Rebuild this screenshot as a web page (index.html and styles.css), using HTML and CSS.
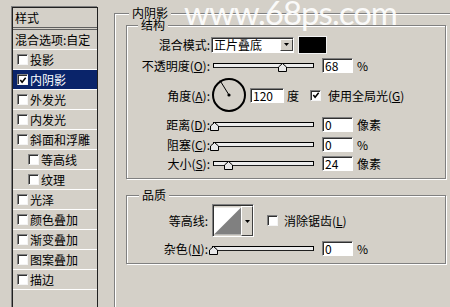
FILE: index.html
```html
<!DOCTYPE html>
<html>
<head>
<meta charset="utf-8">
<title>内阴影</title>
<link rel="stylesheet" href="styles.css">
</head>
<body>
<div class="dialog">
  <div class="styles">
    <div class="st-head">样式</div>
    <div class="st-row st-blend">混合选项:自定</div>
    <div class="st-row"><span class="cb"></span>投影</div>
    <div class="st-row sel"><span class="cb"><svg width="9" height="9" viewBox="0 0 9 9"><path d="M1.5 4 L3.5 6.5 L7.5 1.5" fill="none" stroke="#000" stroke-width="1.7"/></svg></span>内阴影</div>
    <div class="st-row"><span class="cb"></span>外发光</div>
    <div class="st-row"><span class="cb"></span>内发光</div>
    <div class="st-row"><span class="cb"></span>斜面和浮雕</div>
    <div class="st-row sub"><span class="cb"></span>等高线</div>
    <div class="st-row sub"><span class="cb"></span>纹理</div>
    <div class="st-row"><span class="cb"></span>光泽</div>
    <div class="st-row"><span class="cb"></span>颜色叠加</div>
    <div class="st-row"><span class="cb"></span>渐变叠加</div>
    <div class="st-row"><span class="cb"></span>图案叠加</div>
    <div class="st-row"><span class="cb"></span>描边</div>
  </div>

  <div class="outer">
    <div class="title t-outer">内阴影</div>

    <div class="group struct">
      <div class="title t-struct">结构</div>

      <div class="row r1">
        <span class="lbl">混合模式:</span>
        <div class="select"><span class="sel-text">正片叠底</span><span class="drop"><svg width="5" height="3" viewBox="0 0 5 3"><path d="M0 0 H5 L2.5 3 Z" fill="#000"/></svg></span></div>
        <span class="swatch"></span>
      </div>

      <div class="row r2">
        <span class="lbl">不透明度(<u>O</u>):</span>
        <div class="slider"><div class="track"></div><svg class="thumb" style="left:65px" width="9" height="9" viewBox="0 0 9 9"><path d="M4.5 0.5 L8.5 4 V8.5 H0.5 V4 Z" fill="#e8e8e8" stroke="#000"/></svg></div>
        <span class="field">68</span>
        <span class="unit">%</span>
      </div>

      <div class="row r3">
        <span class="lbl">角度(<u>A</u>):</span>
        <svg class="dial" width="36" height="36" viewBox="0 0 36 36"><circle cx="18" cy="18" r="16" fill="none" stroke="#000" stroke-width="2"/><line x1="18" y1="18" x2="9" y2="3.5" stroke="#000" stroke-width="1"/><circle cx="18" cy="18" r="1.6" fill="#000"/></svg>
        <span class="field f-angle">120</span>
        <span class="unit u-deg">度</span>
        <span class="cb cb-global"><svg width="9" height="9" viewBox="0 0 9 9"><path d="M1.5 4 L3.5 6.5 L7.5 1.5" fill="none" stroke="#000" stroke-width="1.7"/></svg></span>
        <span class="cb-text">使用全局光(<u>G</u>)</span>
      </div>

      <div class="row r4">
        <span class="lbl">距离(<u>D</u>):</span>
        <div class="slider"><div class="track"></div><svg class="thumb" style="left:-3px" width="9" height="9" viewBox="0 0 9 9"><path d="M4.5 0.5 L8.5 4 V8.5 H0.5 V4 Z" fill="#e8e8e8" stroke="#000"/></svg></div>
        <span class="field">0</span>
        <span class="unit">像素</span>
      </div>

      <div class="row r5">
        <span class="lbl">阻塞(<u>C</u>):</span>
        <div class="slider"><div class="track"></div><svg class="thumb" style="left:-3px" width="9" height="9" viewBox="0 0 9 9"><path d="M4.5 0.5 L8.5 4 V8.5 H0.5 V4 Z" fill="#e8e8e8" stroke="#000"/></svg></div>
        <span class="field">0</span>
        <span class="unit">%</span>
      </div>

      <div class="row r6">
        <span class="lbl">大小(<u>S</u>):</span>
        <div class="slider"><div class="track"></div><svg class="thumb" style="left:11px" width="9" height="9" viewBox="0 0 9 9"><path d="M4.5 0.5 L8.5 4 V8.5 H0.5 V4 Z" fill="#e8e8e8" stroke="#000"/></svg></div>
        <span class="field">24</span>
        <span class="unit">像素</span>
      </div>
    </div>

    <div class="group quality">
      <div class="title t-quality">品质</div>

      <div class="row q1">
        <span class="lbl lbl-q">等高线:</span>
        <div class="contour">
          <svg class="curve" width="29" height="29" viewBox="0 0 29 29"><rect width="29" height="29" fill="#fff"/><path d="M0 29 L29 0 V29 Z" fill="#808080"/></svg>
          <span class="drop drop-c"><svg width="5" height="3" viewBox="0 0 5 3"><path d="M0 0 H5 L2.5 3 Z" fill="#000"/></svg></span>
        </div>
        <span class="cb cb-anti"></span>
        <span class="cb-text t-anti">消除锯齿(<u>L</u>)</span>
      </div>

      <div class="row q2">
        <span class="lbl lbl-q">杂色(<u>N</u>):</span>
        <div class="slider s-noise"><div class="track"></div><svg class="thumb" style="left:-3px" width="9" height="9" viewBox="0 0 9 9"><path d="M4.5 0.5 L8.5 4 V8.5 H0.5 V4 Z" fill="#e8e8e8" stroke="#000"/></svg></div>
        <span class="field">0</span>
        <span class="unit">%</span>
      </div>
    </div>
  </div>
</div>
<div class="watermark">www.68ps.com</div>
</body>
</html>
```

FILE: styles.css
```css
html, body {
  margin: 0;
  padding: 0;
}
body {
  width: 450px;
  height: 307px;
  overflow: hidden;
  position: relative;
  background: #d4d0c8;
  font-family: "Noto Sans CJK SC", "Noto Sans", sans-serif;
  font-size: 12px;
  color: #000;
}
u {
  text-decoration: underline;
  text-underline-offset: 1px;
}

.dialog {
  display: flex;
  align-items: flex-start;
}

/* left style list */
.styles {
  margin: 7px 0 0 12px;
  width: 86px;
  height: 320px;
  box-sizing: border-box;
  border: 1px solid #202020;
  box-shadow: -1px -1px 0 #808080;
  flex: none;
}
.st-head {
  height: 19px;
  line-height: 19px;
  padding-left: 2px;
  border-bottom: 3px double #606060;
}
.st-row {
  height: 19px;
  line-height: 19px;
  border-bottom: 1px solid #fff;
  display: flex;
  align-items: center;
  white-space: nowrap;
}
.st-blend {
  padding-left: 2px;
}
.st-row .cb {
  margin: 0 2px 0 4px;
}
.st-row.sub .cb {
  margin-left: 15px;
}
.st-row.sel {
  background: #0a246a;
  color: #fff;
}

/* checkbox */
.cb {
  width: 11px;
  height: 11px;
  box-sizing: border-box;
  background: #fff;
  border: 1px solid;
  border-color: #808080 #f4f4f4 #f4f4f4 #808080;
  box-shadow: inset 1px 1px 0 #303030;
  display: inline-flex;
  align-items: center;
  justify-content: center;
  flex: none;
}
.cb svg {
  display: block;
  margin: 1px 0 0 1px;
}

/* group boxes */
.outer {
  margin: 13px 0 0 16px;
  width: 350px;
  height: 310px;
  box-sizing: border-box;
  border: 1px solid #808080;
  box-shadow: inset 1px 1px 0 #fff;
  flex: none;
}
.title {
  width: fit-content;
  height: 14px;
  line-height: 14px;
  margin-top: -8px;
  padding: 0 3px;
  background: #d4d0c8;
  white-space: nowrap;
}
.t-outer {
  margin-left: 14px;
}
.group {
  margin-left: 11px;
  width: 320px;
  box-sizing: border-box;
  border: 1px solid #808080;
  box-shadow: inset 1px 1px 0 #fff, 1px 1px 0 #fff;
}
.struct {
  margin-top: 5px;
  padding-bottom: 5px;
}
.t-struct {
  margin-left: 11px;
}
.quality {
  margin-top: 16px;
  padding-bottom: 5px;
}
.t-quality {
  margin-left: 12px;
}

/* rows */
.row {
  display: flex;
  align-items: center;
  height: 19px;
  white-space: nowrap;
}
.r1 { margin-top: 3px; }
.r2 { margin-top: 2px; }
.r3 { margin-top: 2px; height: 36px; }
.r4 { margin-top: 2px; }
.r5 { margin-top: 1px; }
.r6 { margin-top: 0; }
.q1 { margin-top: 2px; height: 33px; }
.q2 { margin-top: 2px; }

.lbl {
  width: 83px;
  text-align: right;
  flex: none;
}
.lbl-q {
  width: 81px;
}

/* select */
.select {
  margin-left: 1px;
  width: 83px;
  height: 16px;
  box-sizing: border-box;
  background: #fff;
  border: 1px solid;
  border-color: #808080 #fff #fff #808080;
  box-shadow: inset 1px 1px 0 #303030;
  display: flex;
  align-items: center;
  justify-content: space-between;
}
.sel-text {
  padding-left: 2px;
  line-height: 14px;
}
.drop {
  width: 13px;
  height: 12px;
  box-sizing: border-box;
  background: #d4d0c8;
  border: 1px solid;
  border-color: #fff #404040 #404040 #fff;
  display: flex;
  align-items: center;
  justify-content: center;
  flex: none;
}
.swatch {
  margin-left: 4px;
  width: 29px;
  height: 18px;
  box-sizing: border-box;
  background: #000;
  border: 1px solid #f2f2f2;
}

/* slider */
.slider {
  position: relative;
  margin-left: 3px;
  width: 101px;
  height: 19px;
  flex: none;
}
.s-noise {
  margin-left: 4px;
  width: 102px;
}
.track {
  margin-top: 7px;
  height: 5px;
  box-sizing: border-box;
  border: 1px solid #000;
  border-bottom-color: #202020;
  background: #ececec;
}
.thumb {
  position: absolute;
  top: 7px;
  display: block;
}

/* number fields */
.field {
  margin-left: 8px;
  width: 31px;
  height: 15px;
  box-sizing: border-box;
  background: #fff;
  border: 1px solid;
  border-color: #808080 #fff #fff #808080;
  box-shadow: inset 1px 1px 0 #303030;
  padding-left: 2px;
  line-height: 13px;
  flex: none;
}
.unit {
  margin-left: 4px;
}

/* angle */
.dial {
  margin-left: 1px;
  display: block;
  flex: none;
}
.f-angle {
  margin-left: 3px;
  width: 34px;
}
.u-deg {
  margin-left: 3px;
}
.cb-global {
  margin-left: 11px;
}
.cb-text {
  margin-left: 7px;
}

/* contour */
.contour {
  margin-left: 4px;
  width: 42px;
  height: 33px;
  box-sizing: border-box;
  border: 1px solid;
  border-color: #808080 #fff #fff #808080;
  box-shadow: inset 1px 1px 0 #303030;
  display: flex;
  align-items: stretch;
  padding: 1px 0 0 1px;
  flex: none;
}
.curve {
  display: block;
  width: 28px;
  height: 30px;
}
.drop-c {
  height: auto;
  width: 12px;
}
.cb-anti {
  margin-left: 13px;
}
.t-anti {
  margin-left: 6px;
}

/* watermark overlay */
.watermark {
  position: absolute;
  left: 184px;
  top: -4px;
  font-family: "Lato", "DejaVu Sans", sans-serif;
  font-size: 33px;
  line-height: 33px;
  letter-spacing: -1px;
  color: rgba(255, 255, 255, 0.92);
  white-space: nowrap;
}
```
